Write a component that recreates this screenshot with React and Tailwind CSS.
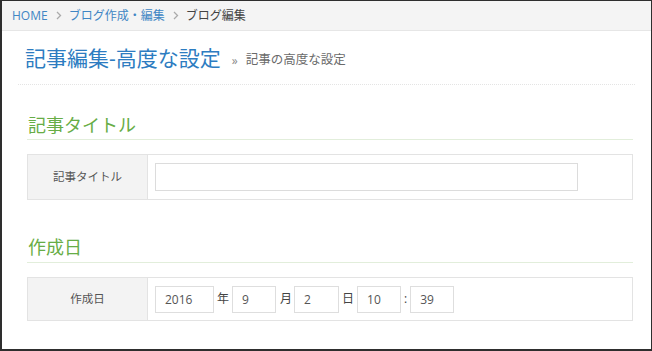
import React from "react";

const font = { fontFamily: '"Open Sans", "Noto Sans CJK JP", sans-serif' };

function Chevron() {
  return (
    <svg width="6" height="9" viewBox="0 0 6 9" className="ml-[8px] mr-[7px]" fill="none">
      <path d="M1 1l3.5 3.5L1 8" stroke="#aaaaaa" strokeWidth="1.3" />
    </svg>
  );
}

function Box({ value, w }) {
  return (
    <input
      readOnly
      value={value}
      className={`${w} h-[27px] border border-[#dedede] bg-white pl-[9px] text-[12px] text-[#555] outline-none`}
    />
  );
}

export default function App() {
  return (
    <div
      className="w-[652px] h-[351px] border-l-2 border-r border-b-2 border-t border-[#2e2e2e] bg-white overflow-hidden"
      style={font}
    >
      <div className="h-[30px] bg-[#f4f4f4] border-b border-[#e6e6e6] flex items-center pl-[10px] text-[12px]">
        <span className="text-[#3f86c4]">HOME</span>
        <Chevron />
        <span className="text-[#3f86c4]">ブログ作成・編集</span>
        <Chevron />
        <span className="text-[#444]">ブログ編集</span>
      </div>

      <div className="ml-[16px] mr-[16px] h-[54px] border-b border-dotted border-[#e4e4e4] flex items-center pl-[7px] pt-[1px]">
        <span className="text-[21px] text-[#2d7cc1] leading-none">記事編集-高度な設定</span>
        <span className="ml-[11px] mt-[5px] text-[12px] text-[#888]">»</span>
        <span className="ml-[8px] mt-[5px] text-[12.5px] text-[#6a6a6a]">記事の高度な設定</span>
      </div>

      <div className="ml-[25px] mr-[18px]">
        <div className="mt-[28px] h-[27px] pb-[3px] border-b border-[#e2eedb] pl-[1px]">
          <div className="h-[24px] leading-[24px] text-[18px] text-[#67ad46]">記事タイトル</div>
        </div>
        <div className="mt-[14px] flex border border-[#e3e3e3] h-[46px]">
          <div className="w-[120px] bg-[#f3f3f3] border-r border-[#e3e3e3] flex items-center justify-center text-[11.5px] text-[#555]">
            記事タイトル
          </div>
          <div className="flex items-center pl-[7px]">
            <input readOnly className="w-[423px] h-[28px] border border-[#dcdcdc] bg-white outline-none" />
          </div>
        </div>

        <div className="mt-[35px] h-[28px] pb-[4px] border-b border-[#e2eedb] pl-[1px]">
          <div className="h-[24px] leading-[24px] text-[18px] text-[#67ad46]">作成日</div>
        </div>
        <div className="mt-[14px] flex border border-[#e3e3e3] h-[44px]">
          <div className="w-[120px] bg-[#f3f3f3] border-r border-[#e3e3e3] flex items-center justify-center text-[11.5px] text-[#555]">
            作成日
          </div>
          <div className="flex items-center pl-[7px] text-[12px] text-[#444]">
            <Box value="2016" w="w-[59px]" />
            <span className="ml-[3px] mr-[3px]">年</span>
            <Box value="9" w="w-[44px]" />
            <span className="ml-[4px] mr-[2px]">月</span>
            <Box value="2" w="w-[45px]" />
            <span className="ml-[3px] mr-[3px]">日</span>
            <Box value="10" w="w-[44px]" />
            <span className="ml-[3px] mr-[3px]">:</span>
            <Box value="39" w="w-[44px]" />
          </div>
        </div>
      </div>
    </div>
  );
}
